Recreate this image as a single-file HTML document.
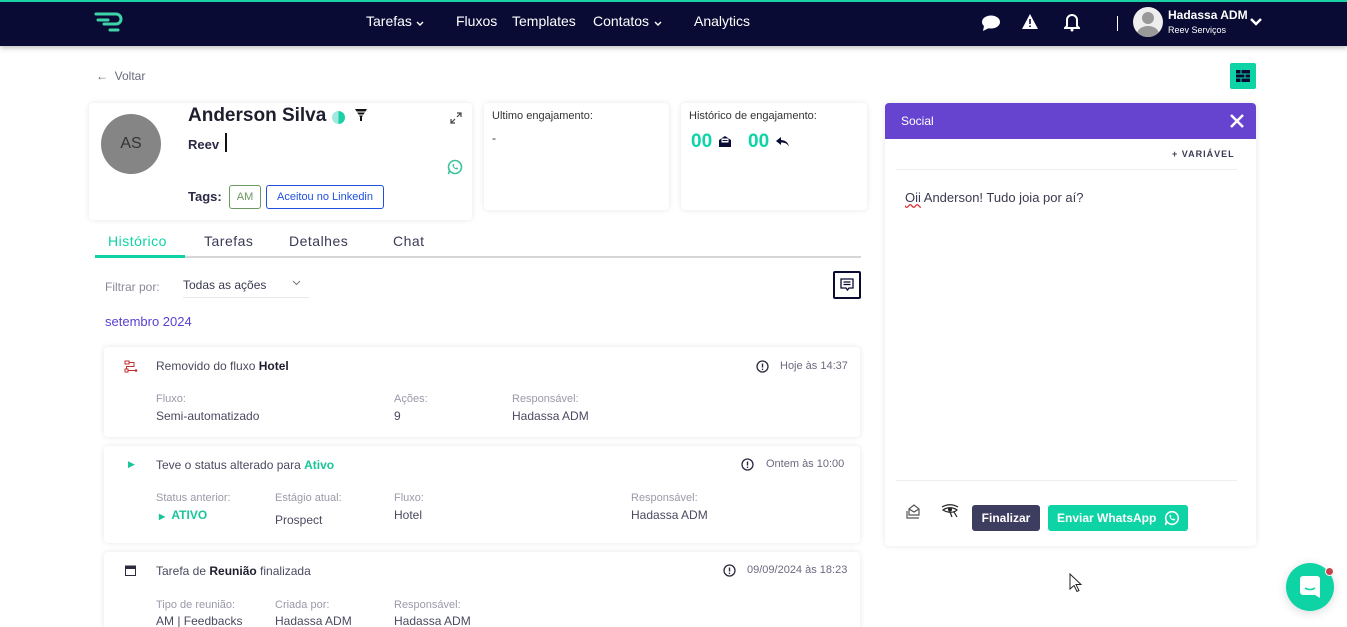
<!DOCTYPE html>
<html><head><meta charset="utf-8">
<style>
*{box-sizing:border-box;margin:0;padding:0}
html,body{width:1347px;height:627px;overflow:hidden}
body{background:#fff;font-family:"Liberation Sans",sans-serif;color:#2b2b45;position:relative}
.a{position:absolute}
.nav{left:0;top:0;width:1347px;height:46px;background:#0a0b35;border-top:2px solid #1ad1a5;box-shadow:0 2px 5px rgba(0,0,0,.25)}
.nav .t{color:#fff;font-size:14px;top:11px}
.card{background:#fff;border-radius:4px;box-shadow:0 0 6px rgba(0,0,0,.1)}
.lbl{font-size:11px;color:#9a9aaa}
.val{font-size:12px;color:#4a4a60}
.s12{font-size:12px}
</style></head><body>
<div class="a nav">
  <svg class="a" style="left:94px;top:9px" width="30" height="24" viewBox="0 0 30 24"><path d="M2 3h20a5 5 0 0 1 0 10H10M4 9h10M16 19h8" stroke="#3fd4a8" stroke-width="3" fill="none" stroke-linecap="round"/></svg>
  <div class="a t" style="left:366px">Tarefas</div>
  <svg class="a" style="left:416px;top:19px" width="8" height="5" viewBox="0 0 8 5"><path d="M1 1l3 3 3-3" stroke="#fff" stroke-width="1.4" fill="none"/></svg>
  <div class="a t" style="left:456px">Fluxos</div>
  <div class="a t" style="left:512px">Templates</div>
  <div class="a t" style="left:593px">Contatos</div>
  <svg class="a" style="left:654px;top:19px" width="8" height="5" viewBox="0 0 8 5"><path d="M1 1l3 3 3-3" stroke="#fff" stroke-width="1.4" fill="none"/></svg>
  <div class="a t" style="left:694px">Analytics</div>
  <svg class="a" style="left:981px;top:12px" width="20" height="18" viewBox="0 0 20 18"><ellipse cx="10" cy="8" rx="9" ry="6.5" fill="#fff"/><path d="M3 12l-1 5 6-3z" fill="#fff"/></svg>
  <svg class="a" style="left:1021px;top:11px" width="18" height="17" viewBox="0 0 18 17"><path d="M9 1L17 16H1z" fill="#fff"/><rect x="8.2" y="6" width="1.6" height="5" fill="#0a0b35"/><rect x="8.2" y="12.5" width="1.6" height="1.6" fill="#0a0b35"/></svg>
  <svg class="a" style="left:1064px;top:10px" width="16" height="20" viewBox="0 0 16 20"><path d="M3 14V8a5 5 0 0 1 10 0v6l2 2H1z" fill="none" stroke="#fff" stroke-width="2"/><circle cx="8" cy="18" r="1.5" fill="#fff"/></svg>
  <div class="a" style="left:1117px;top:14px;width:1px;height:15px;background:#fff"></div>
  <div class="a" style="left:1133px;top:5px;width:30px;height:30px;border-radius:50%;background:#eee;overflow:hidden"><div class="a" style="left:9px;top:5px;width:12px;height:12px;border-radius:50%;background:#999"></div><div class="a" style="left:4px;top:19px;width:22px;height:16px;border-radius:50%;background:#999"></div></div>
  <div class="a" style="left:1168px;top:6px;color:#fff;font-size:12px;font-weight:bold">Hadassa ADM</div>
  <div class="a" style="left:1168px;top:23px;color:#fff;font-size:9px">Reev Serviços</div>
  <svg class="a" style="left:1249px;top:15px" width="14" height="10" viewBox="0 0 14 10"><path d="M2 2l5 5 5-5" stroke="#fff" stroke-width="2.5" fill="none"/></svg>
</div>

<div class="a" style="left:96px;top:69px;font-size:12px;color:#6a6a80">←&nbsp; Voltar</div>
<div class="a" style="left:1230px;top:63px;width:26px;height:26px;background:#0dd3a5;border-radius:2px"><svg class="a" style="left:6px;top:7px" width="14" height="12" viewBox="0 0 14 12"><rect width="14" height="12" fill="#0a0b35"/><path d="M0 4h14M0 8h14M5 0v4M9 4v4M5 8v4" stroke="#0dd3a5" stroke-width="1"/></svg></div>

<div class="a card" style="left:89px;top:103px;width:383px;height:117px">
  <div class="a" style="left:12px;top:11px;width:60px;height:60px;border-radius:50%;background:#858585;color:#333;font-size:16px;text-align:center;line-height:60px">AS</div>
  <div class="a" style="left:99px;top:2px;font-size:19px;font-weight:bold;color:#1e1e2e">Anderson Silva</div>
  <div class="a" style="left:243px;top:8px;width:13px;height:13px;border-radius:50%;background:linear-gradient(90deg,#a3e8df 50%,#1ad1a5 50%)"></div>
  <svg class="a" style="left:266px;top:6px" width="12" height="13" viewBox="0 0 12 13"><path d="M0 0h12L7 8v4H5V8z" fill="#111"/><path d="M1 3h10M2 6h8" stroke="#fff" stroke-width="1"/></svg>
  <svg class="a" style="left:361px;top:9px" width="12" height="12" viewBox="0 0 12 12"><path d="M7 1h4v4M11 1L7 5M5 11H1V7M1 11l4-4" stroke="#444" stroke-width="1.2" fill="none"/></svg>
  <div class="a" style="left:99px;top:34px;font-size:13px;font-weight:bold;color:#2b2b45">Reev</div>
  <div class="a" style="left:136px;top:30px;width:1.5px;height:19px;background:#111"></div>
  <svg class="a" style="left:358px;top:56px" width="16" height="16" viewBox="0 0 16 16"><circle cx="8" cy="8" r="6.5" fill="none" stroke="#3cc39a" stroke-width="1.6"/><path d="M1.5 15l1-3.5" stroke="#3cc39a" stroke-width="1.6"/><path d="M5.5 5.5c0 3 2 5 5 5l.8-1.3-1.6-.8-.8.8c-1-.5-1.7-1.2-2.2-2.2l.8-.8-.8-1.6z" fill="#3cc39a"/></svg>
  <div class="a" style="left:99px;top:86px;font-size:13px;font-weight:bold;color:#2b2b45">Tags:</div>
  <div class="a" style="left:140px;top:82px;width:32px;height:24px;border:1px solid #6a9a60;border-radius:3px;font-size:11px;color:#6a9a60;text-align:center;line-height:22px">AM</div>
  <div class="a" style="left:177px;top:82px;width:118px;height:24px;border:1px solid #2050e0;border-radius:3px;font-size:11px;color:#2050e0;text-align:center;line-height:22px">Aceitou no Linkedin</div>
</div>

<div class="a card" style="left:484px;top:103px;width:185px;height:107px">
  <div class="a" style="left:8px;top:7px;font-size:11px;color:#333">Ultimo engajamento:</div>
  <div class="a s12" style="left:8px;top:28px">-</div>
</div>
<div class="a card" style="left:681px;top:103px;width:186px;height:107px">
  <div class="a" style="left:8px;top:7px;font-size:11px;color:#333">Histórico de engajamento:</div>
  <div class="a" style="left:10px;top:28px;font-size:19px;font-weight:bold;color:#0dd3a5">00</div>
  <svg class="a" style="left:37px;top:32px" width="14" height="13" viewBox="0 0 14 13"><path d="M1 5l6-4 6 4v7H1z" fill="#0a0b35"/><rect x="3.5" y="3.5" width="7" height="4" fill="#fff"/><rect x="4.5" y="5" width="5" height="1" fill="#0a0b35"/></svg>
  <div class="a" style="left:67px;top:28px;font-size:19px;font-weight:bold;color:#0dd3a5">00</div>
  <svg class="a" style="left:95px;top:33px" width="14" height="12" viewBox="0 0 14 12"><path d="M5 1L0 5l5 4V6.5c4 0 6 1 8 4-1-4-3-6-8-6.5z" fill="#0a0b35"/></svg>
</div>

<div class="a" style="left:95px;top:256px;width:766px;height:2px;background:#d6d6d6"></div>
<div class="a" style="left:95px;top:255px;width:90px;height:3px;background:#0dd3a5"></div>
<div class="a" style="left:108px;top:233px;font-size:14px;color:#0dd3a5;letter-spacing:.5px">Histórico</div>
<div class="a" style="left:204px;top:233px;font-size:14px;color:#3a3a55;letter-spacing:.5px">Tarefas</div>
<div class="a" style="left:289px;top:233px;font-size:14px;color:#3a3a55;letter-spacing:.5px">Detalhes</div>
<div class="a" style="left:393px;top:233px;font-size:14px;color:#3a3a55;letter-spacing:.5px">Chat</div>

<div class="a" style="left:105px;top:280px;font-size:12px;color:#8a8a9a">Filtrar por:</div>
<div class="a" style="left:183px;top:278px;font-size:12px;color:#3a3a50">Todas as ações</div>
<svg class="a" style="left:292px;top:280px" width="9" height="6" viewBox="0 0 9 6"><path d="M1 1l3.5 3.5L8 1" stroke="#777" stroke-width="1" fill="none"/></svg>
<div class="a" style="left:183px;top:297px;width:126px;height:1px;background:#e8e8e8"></div>
<div class="a" style="left:833px;top:271px;width:28px;height:28px;border:2px solid #0a0b35;border-radius:2px"><svg class="a" style="left:5px;top:5px" width="14" height="14" viewBox="0 0 14 14"><path d="M1 1h12v9H9l-1.5 2L6 10H1z" fill="none" stroke="#0a0b35" stroke-width="1.3"/><path d="M3.5 4h7M3.5 6.5h7" stroke="#0a0b35" stroke-width="1.2"/></svg></div>
<div class="a" style="left:105px;top:314px;font-size:13px;color:#5a3fd0">setembro 2024</div>

<div class="a card" style="left:104px;top:347px;width:756px;height:90px">
  <svg class="a" style="left:20px;top:13px" width="14" height="14" viewBox="0 0 14 14"><rect x="1" y="1" width="4" height="3" fill="none" stroke="#c03030"/><rect x="1" y="9" width="3" height="3" fill="none" stroke="#c03030"/><path d="M5 2.5h5v4H2.5V9M4 10.5h8" stroke="#c03030" fill="none"/><circle cx="12" cy="10.5" r="1.3" fill="#c03030"/></svg>
  <div class="a s12" style="left:52px;top:12px;color:#4a4a60">Removido do fluxo <b style="color:#1e1e2e">Hotel</b></div>
  <svg class="a" style="left:652px;top:13px" width="13" height="13" viewBox="0 0 13 13"><circle cx="6.5" cy="6.5" r="5.5" fill="none" stroke="#2b2b40" stroke-width="1.3"/><path d="M6.5 3.5v4" stroke="#2b2b40" stroke-width="1.4"/><circle cx="6.5" cy="9.3" r=".8" fill="#2b2b40"/></svg>
  <div class="a" style="left:676px;top:13px;font-size:11px;color:#6a6a80">Hoje às 14:37</div>
  <div class="a lbl" style="left:52px;top:46px">Fluxo:</div><div class="a val" style="left:52px;top:62px">Semi-automatizado</div>
  <div class="a lbl" style="left:290px;top:46px">Ações:</div><div class="a val" style="left:290px;top:62px">9</div>
  <div class="a lbl" style="left:408px;top:46px">Responsável:</div><div class="a val" style="left:408px;top:62px">Hadassa ADM</div>
</div>
<div class="a card" style="left:104px;top:446px;width:756px;height:97px">
  <div class="a" style="left:24px;top:13px;font-size:9px;color:#1ac59a">▶</div>
  <div class="a s12" style="left:52px;top:12px;color:#4a4a60">Teve o status alterado para <b style="color:#1ac59a">Ativo</b></div>
  <svg class="a" style="left:637px;top:12px" width="13" height="13" viewBox="0 0 13 13"><circle cx="6.5" cy="6.5" r="5.5" fill="none" stroke="#2b2b40" stroke-width="1.3"/><path d="M6.5 3.5v4" stroke="#2b2b40" stroke-width="1.4"/><circle cx="6.5" cy="9.3" r=".8" fill="#2b2b40"/></svg>
  <div class="a" style="left:662px;top:12px;font-size:11px;color:#6a6a80">Ontem às 10:00</div>
  <div class="a lbl" style="left:52px;top:46px">Status anterior:</div><div class="a" style="left:55px;top:62px;font-size:12px;font-weight:bold;color:#1ac59a"><span style="font-size:8px">▶</span>&nbsp; ATIVO</div>
  <div class="a lbl" style="left:171px;top:46px">Estágio atual:</div><div class="a val" style="left:171px;top:67px">Prospect</div>
  <div class="a lbl" style="left:290px;top:46px">Fluxo:</div><div class="a val" style="left:290px;top:62px">Hotel</div>
  <div class="a lbl" style="left:527px;top:46px">Responsável:</div><div class="a val" style="left:527px;top:62px">Hadassa ADM</div>
</div>
<div class="a card" style="left:104px;top:552px;width:756px;height:90px">
  <svg class="a" style="left:21px;top:13px" width="11" height="11" viewBox="0 0 11 11"><rect x=".5" y="1" width="10" height="9.5" fill="none" stroke="#2b2b40"/><rect x=".5" y="1" width="10" height="3" fill="#2b2b40"/></svg>
  <div class="a s12" style="left:52px;top:12px;color:#4a4a60">Tarefa de <b style="color:#1e1e2e">Reunião</b> finalizada</div>
  <svg class="a" style="left:619px;top:12px" width="13" height="13" viewBox="0 0 13 13"><circle cx="6.5" cy="6.5" r="5.5" fill="none" stroke="#2b2b40" stroke-width="1.3"/><path d="M6.5 3.5v4" stroke="#2b2b40" stroke-width="1.4"/><circle cx="6.5" cy="9.3" r=".8" fill="#2b2b40"/></svg>
  <div class="a" style="left:643px;top:12px;font-size:11px;color:#6a6a80">09/09/2024 às 18:23</div>
  <div class="a lbl" style="left:52px;top:47px">Tipo de reunião:</div><div class="a val" style="left:52px;top:62px">AM | Feedbacks</div>
  <div class="a lbl" style="left:171px;top:47px">Criada por:</div><div class="a val" style="left:171px;top:62px">Hadassa ADM</div>
  <div class="a lbl" style="left:290px;top:47px">Responsável:</div><div class="a val" style="left:290px;top:62px">Hadassa ADM</div>
</div>

<div class="a card" style="left:885px;top:103px;width:371px;height:443px;border-radius:4px">
  <div class="a" style="left:0;top:0;width:371px;height:36px;background:#6744d0;border-radius:4px 4px 0 0"></div>
  <div class="a" style="left:16px;top:11px;color:#fff;font-size:12px">Social</div>
  <svg class="a" style="left:345px;top:11px" width="14" height="14" viewBox="0 0 14 14"><path d="M1 1l12 12M13 1L1 13" stroke="#fff" stroke-width="2.5"/></svg>
  <div class="a" style="left:287px;top:46px;font-size:9px;font-weight:bold;letter-spacing:1px;color:#3a3a55">+ VARIÁVEL</div>
  <div class="a" style="left:11px;top:66px;width:341px;height:1px;background:#eee"></div>
  <div class="a" style="left:20px;top:87px;font-size:13px;color:#3a3a50"><span style="text-decoration:underline wavy #d33">Oii</span> Anderson! Tudo joia por aí?</div>
  <div class="a" style="left:11px;top:377px;width:341px;height:1px;background:#eee"></div>
  <svg class="a" style="left:21px;top:401px" width="16" height="15" viewBox="0 0 16 15"><path d="M3 5l5-4 5 4v6H3z M3 5l5 3 5-3" fill="none" stroke="#555" stroke-width="1.2"/><path d="M1 7v7h12" fill="none" stroke="#555" stroke-width="1.2"/></svg>
  <svg class="a" style="left:56px;top:401px" width="18" height="14" viewBox="0 0 18 14"><path d="M1 3c5-3 11-3 16 0M2 6c4-3 10-3 14 0-3 3-9 3-14 0z" fill="none" stroke="#222" stroke-width="1.2"/><circle cx="9" cy="5.5" r="2" fill="#222"/><path d="M9 8l2 5M13 8l3 5" stroke="#222" stroke-width="1.2"/></svg>
  <div class="a" style="left:87px;top:402px;width:68px;height:26px;background:#3d3d60;border-radius:3px;color:#fff;font-size:12px;font-weight:bold;text-align:center;line-height:26px">Finalizar</div>
  <div class="a" style="left:163px;top:402px;width:140px;height:26px;background:#0dd3a5;border-radius:3px;color:#fff;font-size:12px;font-weight:bold;line-height:26px;padding-left:9px">Enviar WhatsApp</div>
  <svg class="a" style="left:279px;top:407px" width="16" height="16" viewBox="0 0 16 16"><circle cx="8" cy="8" r="6.3" fill="none" stroke="#fff" stroke-width="1.6"/><path d="M1.5 15l1-3.5" stroke="#fff" stroke-width="1.6"/><path d="M5.5 5.5c0 3 2 5 5 5l.8-1.3-1.6-.8-.8.8c-1-.5-1.7-1.2-2.2-2.2l.8-.8-.8-1.6z" fill="#fff"/></svg>
</div>

<svg class="a" style="left:1069px;top:573px" width="14" height="20" viewBox="0 0 14 20"><path d="M1 1v15l4-3.5 3 6 2-1-3-6h5z" fill="#fff" stroke="#222" stroke-width="1"/></svg>

<div class="a" style="left:1286px;top:563px;width:48px;height:48px;border-radius:50%;background:#0dd3a5;box-shadow:0 2px 10px rgba(0,0,0,.15)">
  <svg class="a" style="left:13px;top:12px" width="22" height="24" viewBox="0 0 22 24"><path d="M4 1h14a3 3 0 0 1 3 3v19l-5-3H4a3 3 0 0 1-3-3V4a3 3 0 0 1 3-3z" fill="#fff"/><path d="M6 13c3 2 7 2 10 0" stroke="#0dd3a5" stroke-width="1.6" fill="none"/></svg>
</div>
<div class="a" style="left:1325px;top:567px;width:9px;height:9px;border-radius:50%;background:#c9434a;border:1px solid #fff"></div>
</body></html>
